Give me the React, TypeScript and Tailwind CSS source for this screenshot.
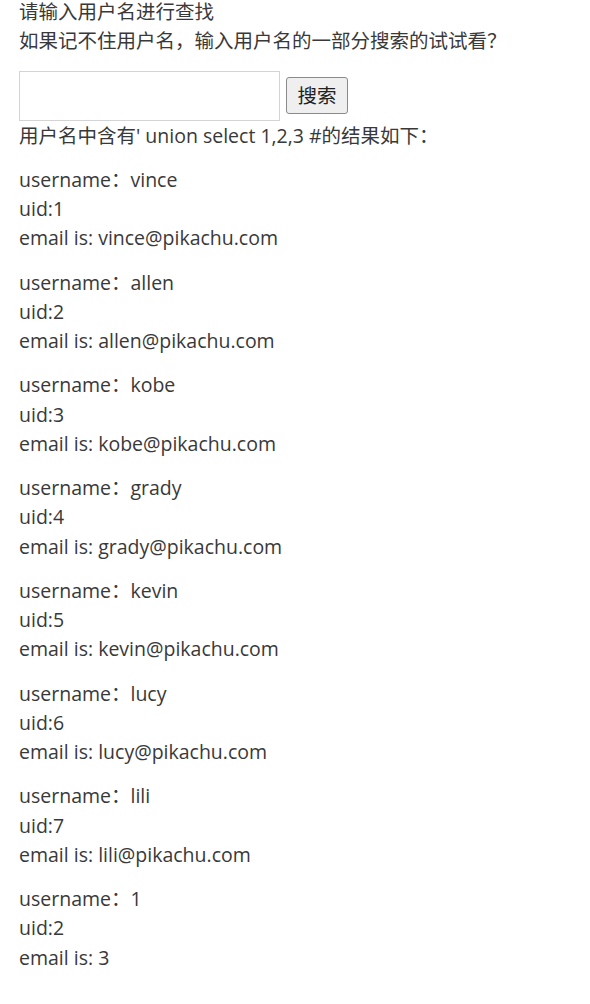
import React from "react";

const records = [
  { u: "vince", id: "1", e: "vince@pikachu.com" },
  { u: "allen", id: "2", e: "allen@pikachu.com" },
  { u: "kobe", id: "3", e: "kobe@pikachu.com" },
  { u: "grady", id: "4", e: "grady@pikachu.com" },
  { u: "kevin", id: "5", e: "kevin@pikachu.com" },
  { u: "lucy", id: "6", e: "lucy@pikachu.com" },
  { u: "lili", id: "7", e: "lili@pikachu.com" },
  { u: "1", id: "2", e: "3" },
];

export default function App() {
  return (
    <div
      className="min-h-[1004px] bg-white pl-[19px] text-[19.5px] leading-[29.25px] text-[#393939]"
      style={{ fontFamily: '"Open Sans", "Noto Sans CJK SC", sans-serif' }}
    >
      <p className="mt-[-3px]">
        请输入用户名进行查找
        <br />
        如果记不住用户名，输入用户名的一部分搜索的试试看？
      </p>
      <form className="mt-[15px] flex items-center" onSubmit={(e) => e.preventDefault()}>
        <input
          type="text"
          className="box-border h-[50px] w-[261px] border border-[#d4d4d4] bg-white outline-none"
        />
        <button
          type="submit"
          className="ml-[6px] box-border h-[37px] w-[62px] rounded-[3px] border border-[#8a8a8a] bg-[#efefef] text-[19.5px] leading-none text-[#222]"
        >
          搜索
        </button>
      </form>
      <p className="mb-[15px]">用户名中含有' union select 1,2,3 #的结果如下：</p>
      {records.map((r, i) => (
        <p key={i} className="mb-[15px]">
          username：{r.u}
          <br />
          uid:{r.id}
          <br />
          email is: {r.e}
        </p>
      ))}
    </div>
  );
}
